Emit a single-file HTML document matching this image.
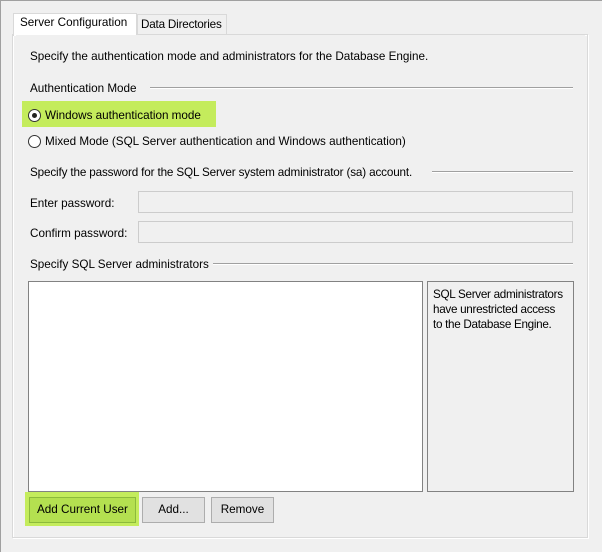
<!DOCTYPE html>
<html><head><style>
body{margin:0;width:602px;height:552px;background:#f0f0f0;position:relative;overflow:hidden;font-family:"Liberation Sans",sans-serif;font-size:11.7px;color:#000}
.a{position:absolute}
.t{position:absolute;white-space:nowrap;line-height:14px}
.ln{position:absolute;height:1px;background:#a0a0a0;border-bottom:1px solid #fff}
.inp{position:absolute;background:#f0f0f0;border:1px solid #ccc;box-sizing:border-box}
.btn{position:absolute;background:#e1e1e1;border:1px solid #adadad;box-sizing:border-box;text-align:center;line-height:22px}
.rad{position:absolute;width:11px;height:11px;border:1px solid #333;border-radius:50%;background:#fff}
</style></head><body>
<div class="a" style="left:0;top:0;width:602px;height:1px;background:#a0a0a0"></div>
<div class="a" style="left:0;top:0;width:1px;height:552px;background:#a0a0a0"></div>
<div class="a" style="left:12px;top:34px;width:576px;height:504px;border:1px solid #d9d9d9;box-sizing:border-box;background:#f0f0f0;box-shadow:inset 1px 1px 0 #fff,1px 1px 0 #fff"></div>
<div class="a" style="left:137px;top:14px;width:90px;height:20px;border:1px solid #d9d9d9;border-bottom:none;box-sizing:border-box;background:#f0f0f0"></div>
<div class="t" style="left:141px;top:18px;letter-spacing:-0.2px">Data Directories</div>
<div class="a" style="left:13px;top:13px;width:124px;height:23px;border:1px solid #d9d9d9;border-bottom:none;box-sizing:border-box;background:#fff"></div>
<div class="a" style="left:16px;top:35px;width:569px;height:500px;background:#f0f0f0"></div>
<div class="t" style="left:20px;top:16px">Server Configuration</div>
<div class="t" style="left:30px;top:50px">Specify the authentication mode and administrators for the Database Engine.</div>
<div class="t" style="left:30px;top:82px">Authentication Mode</div>
<div class="ln" style="left:150px;top:87px;width:423px"></div>
<div class="a" style="left:22px;top:101px;width:194px;height:26px;background:#c4ec5c"></div>
<div class="rad" style="left:28px;top:109px"></div>
<div class="a" style="left:32px;top:113px;width:5px;height:5px;border-radius:50%;background:#222"></div>
<div class="t" style="left:45px;top:109px">Windows authentication mode</div>
<div class="rad" style="left:28px;top:135px"></div>
<div class="t" style="left:45px;top:135px">Mixed Mode (SQL Server authentication and Windows authentication)</div>
<div class="t" style="left:30px;top:166px;letter-spacing:-0.15px">Specify the password for the SQL Server system administrator (sa) account.</div>
<div class="ln" style="left:432px;top:171px;width:141px"></div>
<div class="t" style="left:30px;top:197px">Enter password:</div>
<div class="inp" style="left:138px;top:191px;width:435px;height:22px"></div>
<div class="t" style="left:30px;top:227px">Confirm password:</div>
<div class="inp" style="left:138px;top:221px;width:435px;height:22px"></div>
<div class="t" style="left:30px;top:258px">Specify SQL Server administrators</div>
<div class="ln" style="left:213px;top:263px;width:360px"></div>
<div class="a" style="left:28px;top:281px;width:395px;height:211px;background:#fff;border:1px solid #828282;box-sizing:border-box"></div>
<div class="a" style="left:427px;top:281px;width:147px;height:211px;border:1px solid #828282;box-sizing:border-box"></div>
<div class="t" style="left:433px;top:287px;line-height:15px;letter-spacing:-0.3px">SQL Server administrators<br>have unrestricted access<br>to the Database Engine.</div>
<div class="a" style="left:25px;top:492px;width:114px;height:34px;background:#c4ec5c"></div>
<div class="btn" style="left:29px;top:497px;width:107px;height:26px;background:#b4e050;border-color:#8cba3c;line-height:24px">Add Current User</div>
<div class="btn" style="left:142px;top:497px;width:63px;height:26px;line-height:24px">Add...</div>
<div class="btn" style="left:211px;top:497px;width:63px;height:26px;line-height:24px">Remove</div>
</body></html>
